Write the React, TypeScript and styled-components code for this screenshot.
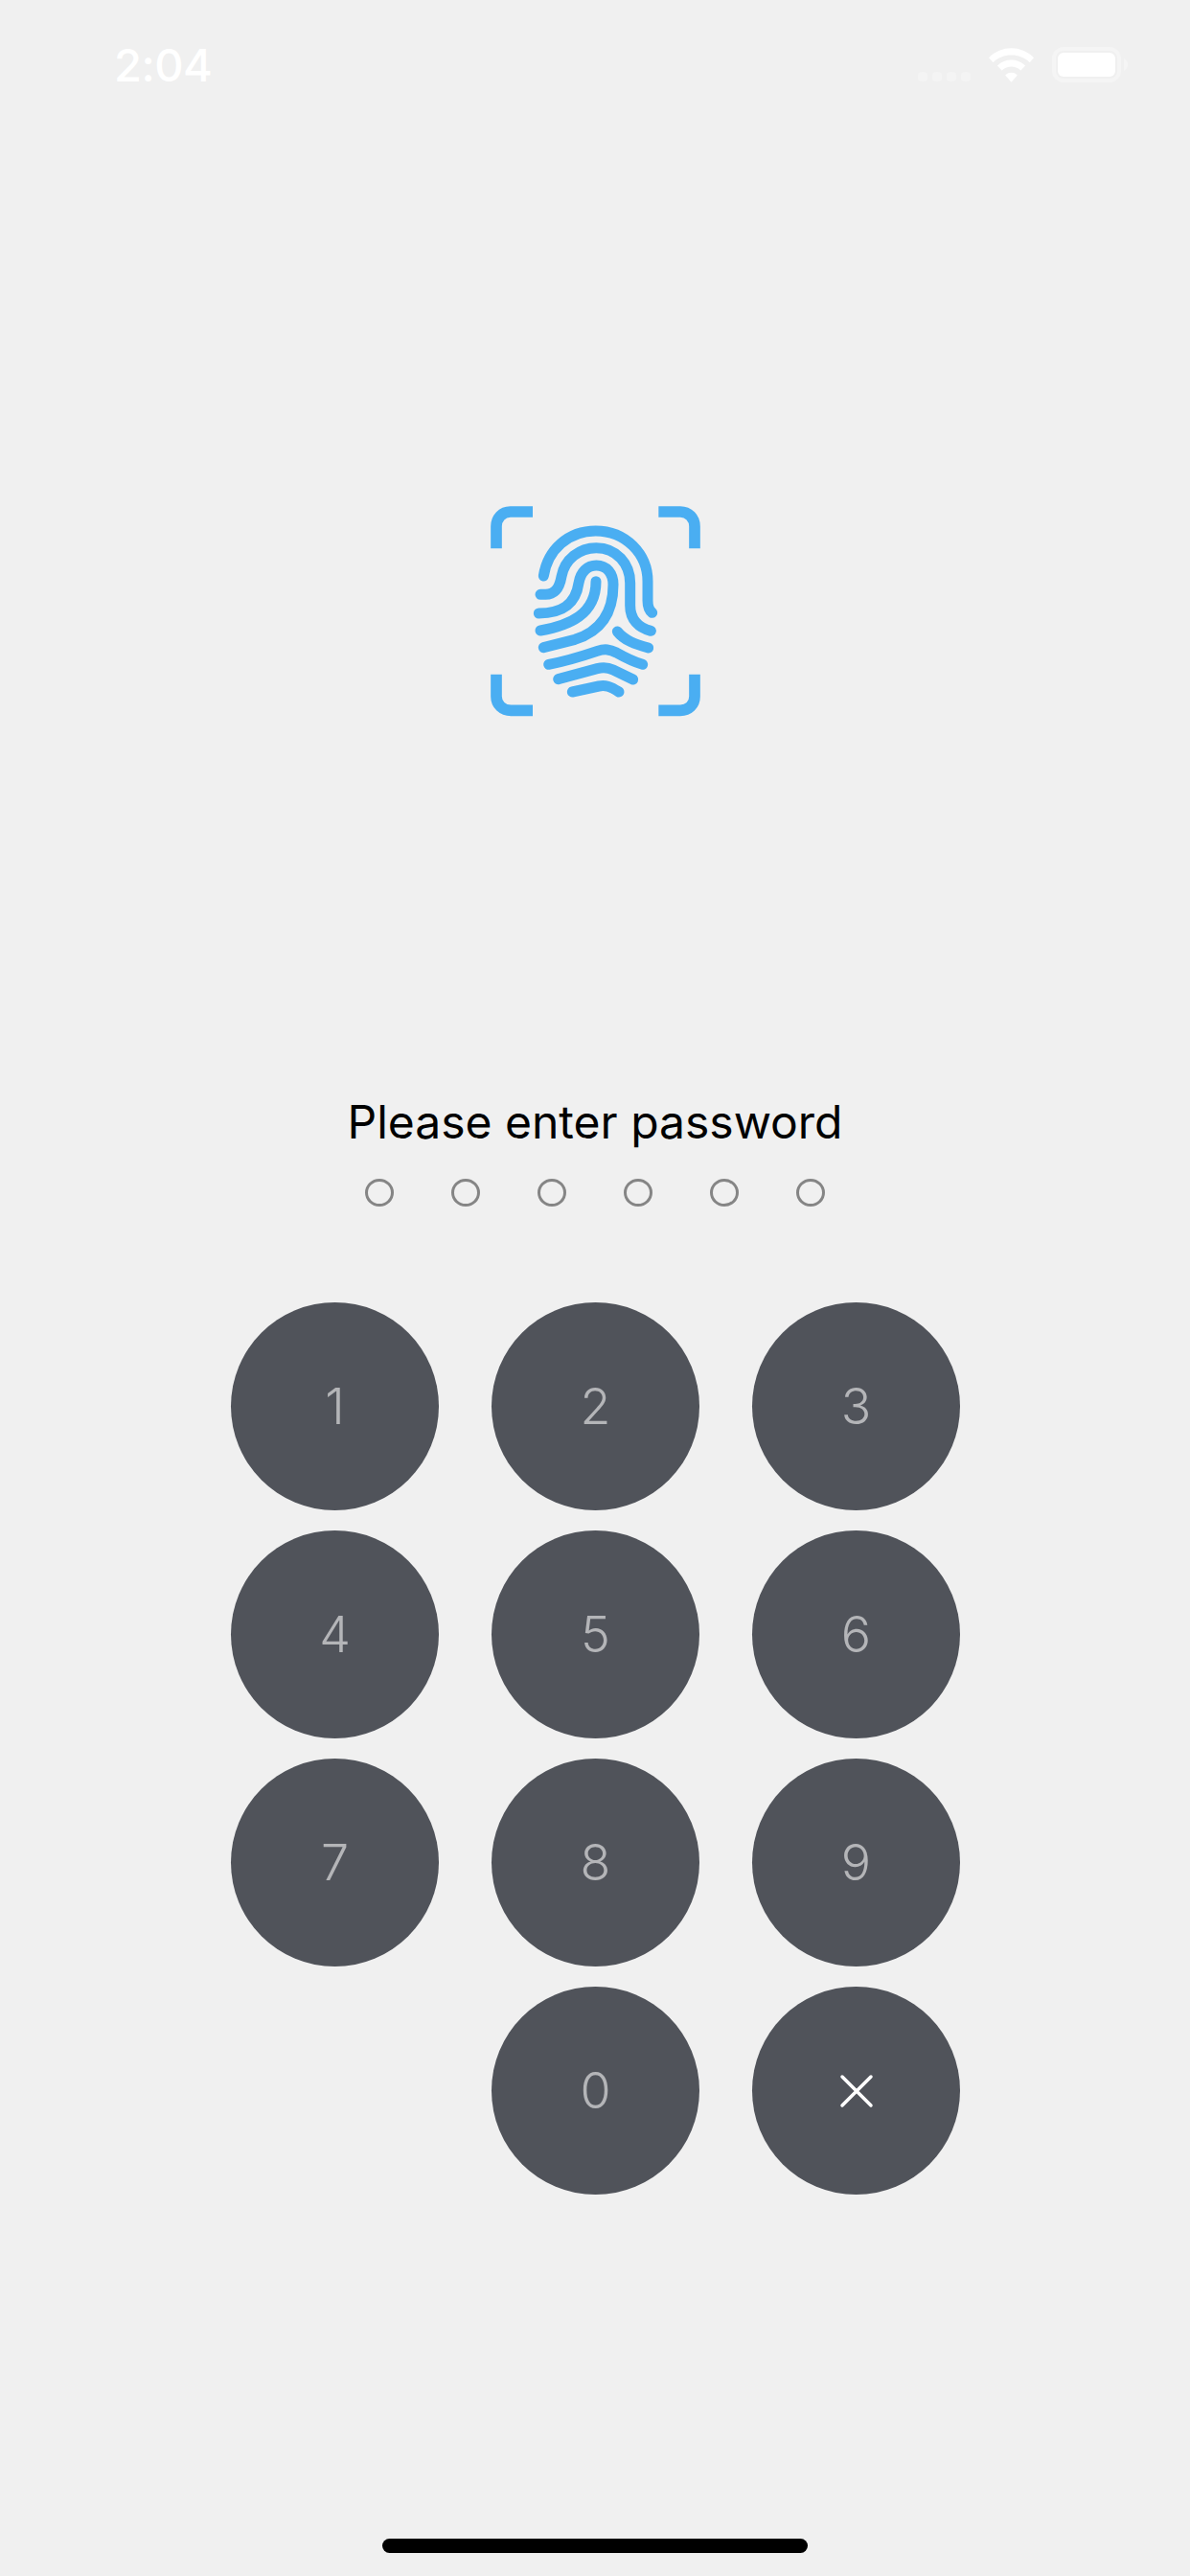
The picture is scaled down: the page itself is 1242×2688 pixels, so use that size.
import React from 'react';
import styled, { createGlobalStyle } from 'styled-components';

const GlobalStyle = createGlobalStyle`
  html, body {
    margin: 0;
    padding: 0;
    background: #f0f0f0;
  }
`;

const Screen = styled.div`
  position: relative;
  width: 1242px;
  height: 2688px;
  background: #f0f0f0;
  font-family: Inter, "Liberation Sans", sans-serif;
  overflow: hidden;
`;

const StatusBar = styled.div`
  height: 132px;
  box-sizing: border-box;
  padding: 49px 65px 0 119px;
  display: flex;
  justify-content: space-between;
  align-items: flex-start;
`;

const Clock = styled.span`
  font-size: 47px;
  line-height: 37px;
  font-weight: 500;
  letter-spacing: -0.5px;
  color: #fff;
`;

const StatusIcons = styled.div`
  display: flex;
  align-items: flex-end;
  gap: 19px;
  height: 37px;
`;

const Fingerprint = styled.svg`
  display: block;
  margin: 378px 0 0 490px;
`;

const Prompt = styled.div`
  margin-top: 381px;
  text-align: center;
  font-size: 48px;
  line-height: 60px;
  color: #000;
`;

const DotRow = styled.div`
  margin-top: 29px;
  display: flex;
  justify-content: center;
  gap: 60px;
`;

const Dot = styled.span`
  width: 30px;
  height: 29px;
  box-sizing: border-box;
  border: 3px solid #858585;
  border-radius: 50%;
`;

const Keypad = styled.div`
  margin: 100px 0 0 241px;
  display: grid;
  grid-template-columns: repeat(3, 217px);
  grid-auto-rows: 217px;
  column-gap: 55px;
  row-gap: 21px;
`;

const Key = styled.div<{ $column?: number }>`
  grid-column: ${(props) => props.$column ?? 'auto'};
  display: flex;
  align-items: center;
  justify-content: center;
  border-radius: 50%;
  background: #50535a;
  color: #b4b5b8;
  font-size: 52px;
  font-weight: 350;
`;

const HomeBar = styled.div`
  position: absolute;
  left: 399px;
  bottom: 24px;
  width: 444px;
  height: 15px;
  border-radius: 8px;
  background: #000;
`;

const keys = ['1', '2', '3', '4', '5', '6', '7', '8', '9'];

const App = () => (
  <Screen>
    <GlobalStyle />
    <StatusBar>
      <Clock>2:04</Clock>
      <StatusIcons>
        <svg width="55" height="11" viewBox="0 0 55 11">
          {[0, 15, 30, 45].map((x) => (
            <rect key={x} x={x} y="0" width="10" height="10" rx="4" fill="#f4f4f4" />
          ))}
        </svg>
        <svg width="47" height="36" viewBox="275 58 142 107" fill="#fff">
          <path d="M275 88 C295 68 320 58 346 58 C372 58 397 68 417 88 L404 103 C388 88 368 80 346 80 C324 80 304 88 289 103 Z" />
          <path d="M302 113 C315 101 330 95 346 95 C362 95 377 101 390 113 L376 128 C367 120 357 116 346 116 C335 116 325 120 316 128 Z" />
          <path d="M327 143 C333 137 339 135 346 135 C353 135 359 137 365 143 L346 165 Z" />
        </svg>
        <svg width="79" height="37" viewBox="0 0 79 37" fill="none">
          <rect x="2" y="2" width="68" height="33" rx="10" stroke="#f5f5f5" strokeWidth="4" />
          <rect x="6" y="6" width="60" height="25" rx="6" fill="#fff" />
          <path d="M75 12 C78 14 79 16 79 18.5 C79 21 78 23 75 25 Z" fill="#f5f5f5" />
        </svg>
      </StatusIcons>
    </StatusBar>
    <Fingerprint width="260" height="250" viewBox="0 0 780 750" fill="none" stroke="#4aaef2">
      <g strokeWidth="35">
        <path d="M198 72 H128 C102 72 84 92 84 118 V187" />
        <path d="M592 72 H660 C686 72 705 92 705 118 V187" />
        <path d="M84 581 V650 C84 676 104 694 130 694 H198" />
        <path d="M705 581 V650 C705 676 686 694 660 694 H592" />
      </g>
      <g strokeWidth="33" strokeLinecap="round">
        <path d="M232 273 C245 190 310 132 395 132 C490 132 558 205 558 290 V350 C558 368 562 380 572 388" />
        <path d="M222 331 H238 C268 331 282 310 288 275 C298 220 345 185 397 185 C460 185 503 235 503 295 V365 C503 410 530 435 568 445" />
        <path d="M217 390 C285 390 332 365 342 295 C348 260 370 240 397 240 C430 240 450 265 450 300 C450 400 400 450 330 472 L232 497" />
        <path d="M222 444 C310 428 396 395 396 290" />
        <path d="M463 447 C485 475 520 487 560 498" />
        <path d="M248 550 C300 540 350 525 400 508 C425 500 440 503 460 513 C490 530 515 542 542 550" />
        <path d="M278 596 L400 563 C420 558 435 560 450 567 L512 597" />
        <path d="M322 636 L405 618 C425 614 440 618 468 636" />
      </g>
    </Fingerprint>
    <Prompt>Please enter password</Prompt>
    <DotRow>
      {[0, 1, 2, 3, 4, 5].map((i) => (
        <Dot key={i} />
      ))}
    </DotRow>
    <Keypad>
      {keys.map((k) => (
        <Key key={k}>{k}</Key>
      ))}
      <Key $column={2}>0</Key>
      <Key>
        <svg width="36" height="36" viewBox="0 0 36 36" stroke="#fff" strokeWidth="3.5" strokeLinecap="round">
          <path d="M3 3 L33 33 M33 3 L3 33" />
        </svg>
      </Key>
    </Keypad>
    <HomeBar />
  </Screen>
);

export default App;
